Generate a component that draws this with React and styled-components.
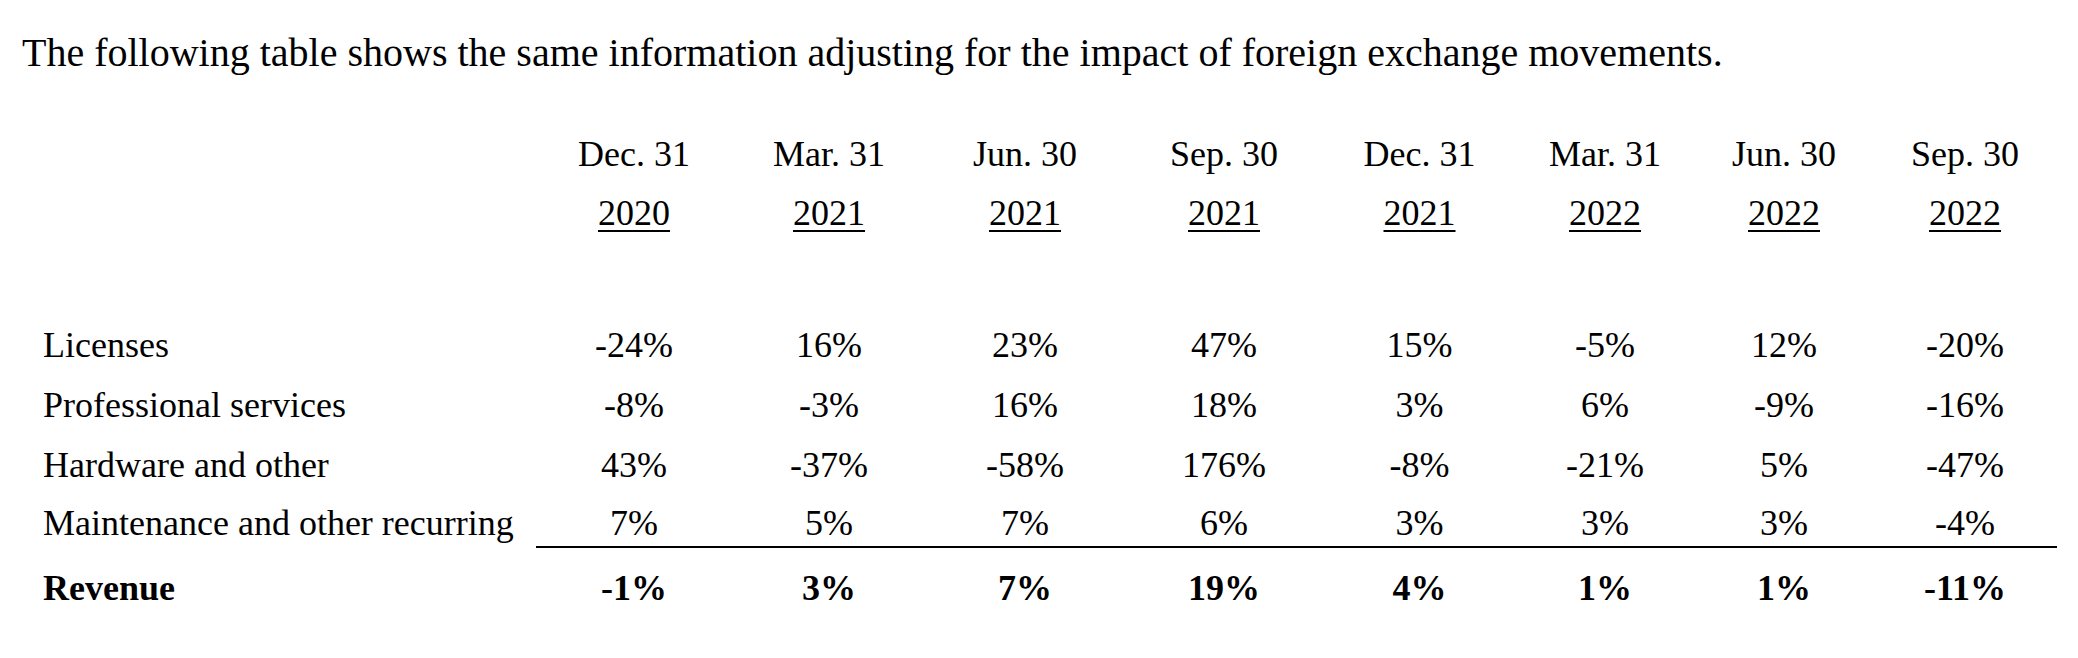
import React from 'react';
import styled, { createGlobalStyle } from 'styled-components';

const GlobalStyle = createGlobalStyle`
  html, body {
    margin: 0;
    padding: 0;
    background: #ffffff;
  }
  body {
    font-family: 'Liberation Serif', 'Times New Roman', serif;
    color: #000000;
  }
`;

const COLS = '514px 196px 194px 198px 200px 191px 180px 178px 184px';

const Page = styled.div`
  width: 2078px;
  height: 658px;
  box-sizing: border-box;
  padding: 30px 0 0 22px;
  font-size: 36px;
`;

const Intro = styled.p`
  margin: 0;
  font-size: 40px;
  line-height: 46px;
  white-space: nowrap;
`;

const Table = styled.div`
  display: flex;
  flex-direction: column;
`;

const Row = styled.div`
  display: grid;
  grid-template-columns: ${COLS};
  line-height: ${(p) => p.$h}px;
  margin-top: ${(p) => p.$gap || 0}px;
  font-weight: ${(p) => (p.$bold ? 700 : 400)};
`;

const Label = styled.div`
  padding-left: 21px;
  padding-top: ${(p) => p.$pad || 0}px;
  white-space: nowrap;
`;

const Cell = styled.div`
  text-align: center;
  white-space: nowrap;
  padding-top: ${(p) => p.$pad || 0}px;
  border-bottom: ${(p) => (p.$ruled ? '2px solid #000' : 'none')};
`;

const Year = styled.span`
  text-decoration: underline;
  text-decoration-thickness: 2px;
  text-underline-offset: 5px;
`;

const periods = [
  ['Dec. 31', '2020'],
  ['Mar. 31', '2021'],
  ['Jun. 30', '2021'],
  ['Sep. 30', '2021'],
  ['Dec. 31', '2021'],
  ['Mar. 31', '2022'],
  ['Jun. 30', '2022'],
  ['Sep. 30', '2022'],
];

const rows = [
  { label: 'Licenses', values: ['-24%', '16%', '23%', '47%', '15%', '-5%', '12%', '-20%'] },
  { label: 'Professional services', values: ['-8%', '-3%', '16%', '18%', '3%', '6%', '-9%', '-16%'] },
  { label: 'Hardware and other', values: ['43%', '-37%', '-58%', '176%', '-8%', '-21%', '5%', '-47%'] },
];

const maintenance = ['7%', '5%', '7%', '6%', '3%', '3%', '3%', '-4%'];
const revenue = ['-1%', '3%', '7%', '19%', '4%', '1%', '1%', '-11%'];

export default function App() {
  return (
    <Page>
      <GlobalStyle />
      <Intro>
        The following table shows the same information adjusting for the impact of foreign exchange movements.
      </Intro>
      <Table>
        <Row $h={51} $gap={53}>
          <Label />
          {periods.map(([d], i) => (
            <Cell key={i}>{d}</Cell>
          ))}
        </Row>
        <Row $h={51} $gap={8}>
          <Label />
          {periods.map(([, y], i) => (
            <Cell key={i}>
              <Year>{y}</Year>
            </Cell>
          ))}
        </Row>
        {rows.map((r, ri) => (
          <Row key={r.label} $h={60} $gap={ri === 0 ? 76 : 0}>
            <Label>{r.label}</Label>
            {r.values.map((v, i) => (
              <Cell key={i}>{v}</Cell>
            ))}
          </Row>
        ))}
        <Row $h={46}>
          <Label $pad={5}>Maintenance and other recurring</Label>
          {maintenance.map((v, i) => (
            <Cell key={i} $pad={5} $ruled>
              {v}
            </Cell>
          ))}
        </Row>
        <Row $h={60} $gap={10} $bold>
          <Label>Revenue</Label>
          {revenue.map((v, i) => (
            <Cell key={i}>{v}</Cell>
          ))}
        </Row>
      </Table>
    </Page>
  );
}
